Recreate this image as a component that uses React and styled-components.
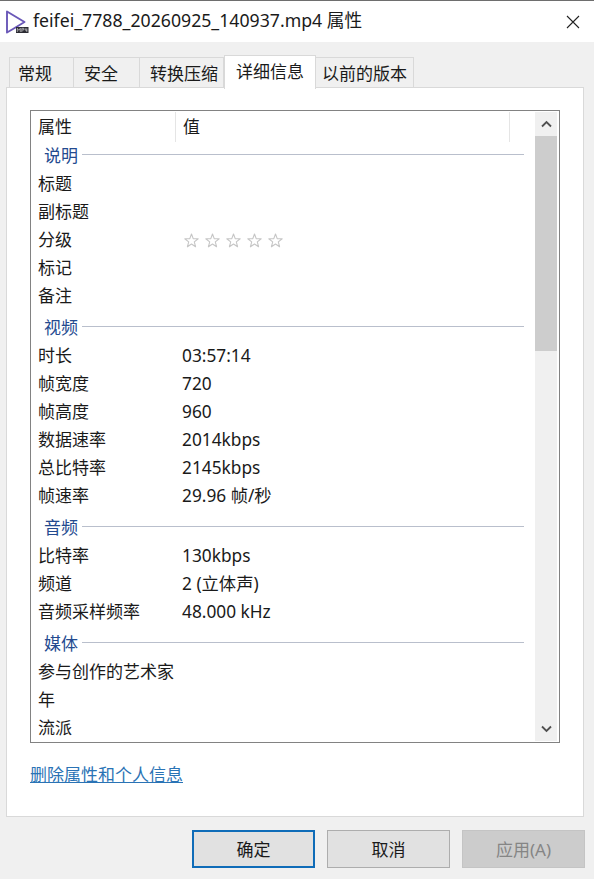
import React from 'react';
import styled, { createGlobalStyle } from 'styled-components';

const Global = createGlobalStyle`
  html, body { margin: 0; padding: 0; background: #f0f0f0; overflow: hidden; }
  * { box-sizing: border-box; }
`;

const FONT = `"Noto Sans", "Noto Sans CJK SC", sans-serif`;

const Window = styled.div`
  width: 594px; height: 879px; display: flex; flex-direction: column;
  background: #f0f0f0; font-family: ${FONT}; color: #1a1a1a;
  border-top: 1px solid #6e6e6e;
`;
const TitleBar = styled.div`
  height: 41px; flex: none; background: #fff; display: flex; align-items: center;
  padding: 0 14px 0 5px;
`;
const FileIcon = styled.svg`width: 24px; height: 24px; flex: none;`;
const TitleText = styled.div`
  flex: 1; margin-left: 4px; padding-bottom: 3px; font-size: 17.7px; line-height: 24px; color: #1a1a1a; white-space: nowrap;
`;
const CloseIcon = styled.svg`width: 14px; height: 14px; flex: none;`;
const TabStrip = styled.div`
  height: 46px; flex: none; display: flex; align-items: flex-end; padding-left: 9px;
`;
const Tab = styled.div`
  width: ${p => p.$w}px; height: ${p => (p.$active ? 34 : 31)}px;
  margin-bottom: ${p => (p.$active ? -1 : 0)}px;
  background: ${p => (p.$active ? '#fff' : '#f0f0f0')};
  border: 1px solid #d9d9d9;
  border-bottom: ${p => (p.$active ? 'none' : '1px solid #d9d9d9')};
  border-left: ${p => (p.$active || p.$first ? '1px solid #d9d9d9' : 'none')};
  padding-left: ${p => p.$pad}px;
  padding-top: 2px;
  font-size: 17px; line-height: 28px; white-space: nowrap; position: relative; z-index: ${p => (p.$active ? 2 : 1)};
`;
const Panel = styled.div`
  width: 578px; height: 730px; margin-left: 6px; flex: none; background: #fff;
  border: 1px solid #d9d9d9; padding: 22px 23px 0 23px; display: flex; flex-direction: column;
  margin-top: -1px;
`;
const ListBox = styled.div`
  width: 530px; height: 633px; flex: none; border: 1px solid #828282; display: flex;
  padding: 1px 2px 1px 0; overflow: hidden; background: #fff;
`;
const ListContent = styled.div`flex: 1; min-width: 0; overflow: hidden;`;
const HeaderRow = styled.div`
  height: 30px; display: flex; font-size: 17px; line-height: 30px;
`;
const HeaderCell = styled.div`
  width: ${p => p.$w}px; flex: none; padding-left: 7px; border-right: 1px solid #e5e5e5;
`;
const GroupRow = styled.div`
  height: ${p => (p.$first ? 28 : 32)}px; padding-top: ${p => (p.$first ? 0 : 4)}px; padding-left: 13px; padding-right: 11px;
  display: flex; align-items: center; gap: 4px; color: #234a8f; font-size: 17px; line-height: 28px;
`;
const GroupLine = styled.div`flex: 1; height: 1px; background: #b9bfcc; margin-top: -3px;`;
const Row = styled.div`
  height: 28px; display: flex; font-size: 17px; line-height: 28px; white-space: nowrap;
`;
const Label = styled.div`width: 144px; flex: none; padding-left: 7px;`;
const Value = styled.div`padding-left: 7px; flex: 1; font-size: 17.3px;`;
const Stars = styled.div`display: flex; gap: 6px; padding-left: 9px; align-items: center;`;
const StarIcon = styled.svg`width: 15px; height: 15px; flex: none;`;
const ScrollBar = styled.div`
  width: 22px; flex: none; background: #f0f0f0; display: flex; flex-direction: column;
`;
const ScrollButton = styled.div`
  height: 24px; flex: none; display: flex; align-items: center; justify-content: center;
`;
const Chevron = styled.svg`width: 11px; height: 8px;`;
const Thumb = styled.div`height: 215px; flex: none; background: #cdcdcd;`;
const Track = styled.div`flex: 1;`;
const LinkText = styled.a`
  margin-top: 20px; font-size: 17px; line-height: 24px; color: #2a73b5; text-decoration: underline; align-self: flex-start;
`;
const Footer = styled.div`
  display: flex; gap: 12px; padding: 13px 0 0 192px;
`;
const Button = styled.div`
  width: 123px; height: 38px; display: flex; align-items: center; justify-content: center;
  padding-bottom: 2px;
  background: ${p => (p.$disabled ? '#cccccc' : '#e1e1e1')};
  border: ${p => (p.$primary ? '2px solid #0f6cb8' : p.$disabled ? '1px solid #c4c4c4' : '1px solid #adadad')};
  color: ${p => (p.$disabled ? '#858585' : '#1a1a1a')};
  font-size: 17px;
`;

const Star = () => (
  <StarIcon viewBox="0 0 15 15">
    <path d="M7.5 1 L9.2 5.6 L14.2 5.8 L10.3 8.9 L11.6 13.8 L7.5 11 L3.4 13.8 L4.7 8.9 L0.8 5.8 L5.8 5.6 Z"
      fill="none" stroke="#c6c6c6" strokeWidth="1.1" strokeLinejoin="round" />
  </StarIcon>
);

const data = [
  { group: '说明', first: true, rows: [['标题'], ['副标题'], ['分级', 'stars'], ['标记'], ['备注']] },
  { group: '视频', rows: [['时长', '03:57:14'], ['帧宽度', '720'], ['帧高度', '960'], ['数据速率', '2014kbps'], ['总比特率', '2145kbps'], ['帧速率', '29.96 帧/秒']] },
  { group: '音频', rows: [['比特率', '130kbps'], ['频道', '2 (立体声)'], ['音频采样频率', '48.000 kHz']] },
  { group: '媒体', rows: [['参与创作的艺术家'], ['年'], ['流派']] },
];

const tabs = [
  { t: '常规', w: 65, pad: 8, first: true },
  { t: '安全', w: 66, pad: 10 },
  { t: '转换压缩', w: 84, pad: 10 },
  { t: '详细信息', w: 92, pad: 11, active: true },
  { t: '以前的版本', w: 98, pad: 6 },
];

export default function App() {
  return (
    <>
      <Global />
      <Window>
        <TitleBar>
          <FileIcon viewBox="0 0 24 24">
            <path d="M2 1.5 L19.5 12 L8 19 L2 22.5 Z" fill="none" stroke="#6a58b8" strokeWidth="1.9" strokeLinejoin="round" />
            <rect x="11" y="17" width="12.5" height="6" fill="#2b2b33" />
            <path d="M12.3 22 V18.3 L13.8 20.3 L15.3 18.3 V22 M16.8 22 V18.3 H18.8 V20 H16.8 M20.3 18.3 V20.2 H22.3 M21.8 18.3 V22" fill="none" stroke="#e8e8e8" strokeWidth="0.6" />
          </FileIcon>
          <TitleText>feifei_7788_20260925_140937.mp4 属性</TitleText>
          <CloseIcon viewBox="0 0 14 14">
            <path d="M1 1 L13 13 M13 1 L1 13" stroke="#222" strokeWidth="1.1" fill="none" />
          </CloseIcon>
        </TitleBar>
        <TabStrip>
          {tabs.map(t => (
            <Tab key={t.t} $w={t.w} $pad={t.pad} $active={t.active} $first={t.first}>{t.t}</Tab>
          ))}
        </TabStrip>
        <Panel>
          <ListBox>
            <ListContent>
              <HeaderRow>
                <HeaderCell $w={145}>属性</HeaderCell>
                <HeaderCell $w={334}>值</HeaderCell>
              </HeaderRow>
              {data.map(g => (
                <React.Fragment key={g.group}>
                  <GroupRow $first={g.first}>
                    {g.group}
                    <GroupLine />
                  </GroupRow>
                  {g.rows.map(([k, v]) => (
                    <Row key={k}>
                      <Label>{k}</Label>
                      {v === 'stars' ? (
                        <Stars><Star /><Star /><Star /><Star /><Star /></Stars>
                      ) : (
                        <Value>{v}</Value>
                      )}
                    </Row>
                  ))}
                </React.Fragment>
              ))}
            </ListContent>
            <ScrollBar>
              <ScrollButton>
                <Chevron viewBox="0 0 11 8"><path d="M1 6.5 L5.5 2 L10 6.5" fill="none" stroke="#505050" strokeWidth="1.8" /></Chevron>
              </ScrollButton>
              <Thumb />
              <Track />
              <ScrollButton>
                <Chevron viewBox="0 0 11 8"><path d="M1 1.5 L5.5 6 L10 1.5" fill="none" stroke="#505050" strokeWidth="1.8" /></Chevron>
              </ScrollButton>
            </ScrollBar>
          </ListBox>
          <LinkText>删除属性和个人信息</LinkText>
        </Panel>
        <Footer>
          <Button $primary>确定</Button>
          <Button>取消</Button>
          <Button $disabled>应用(A)</Button>
        </Footer>
      </Window>
    </>
  );
}
